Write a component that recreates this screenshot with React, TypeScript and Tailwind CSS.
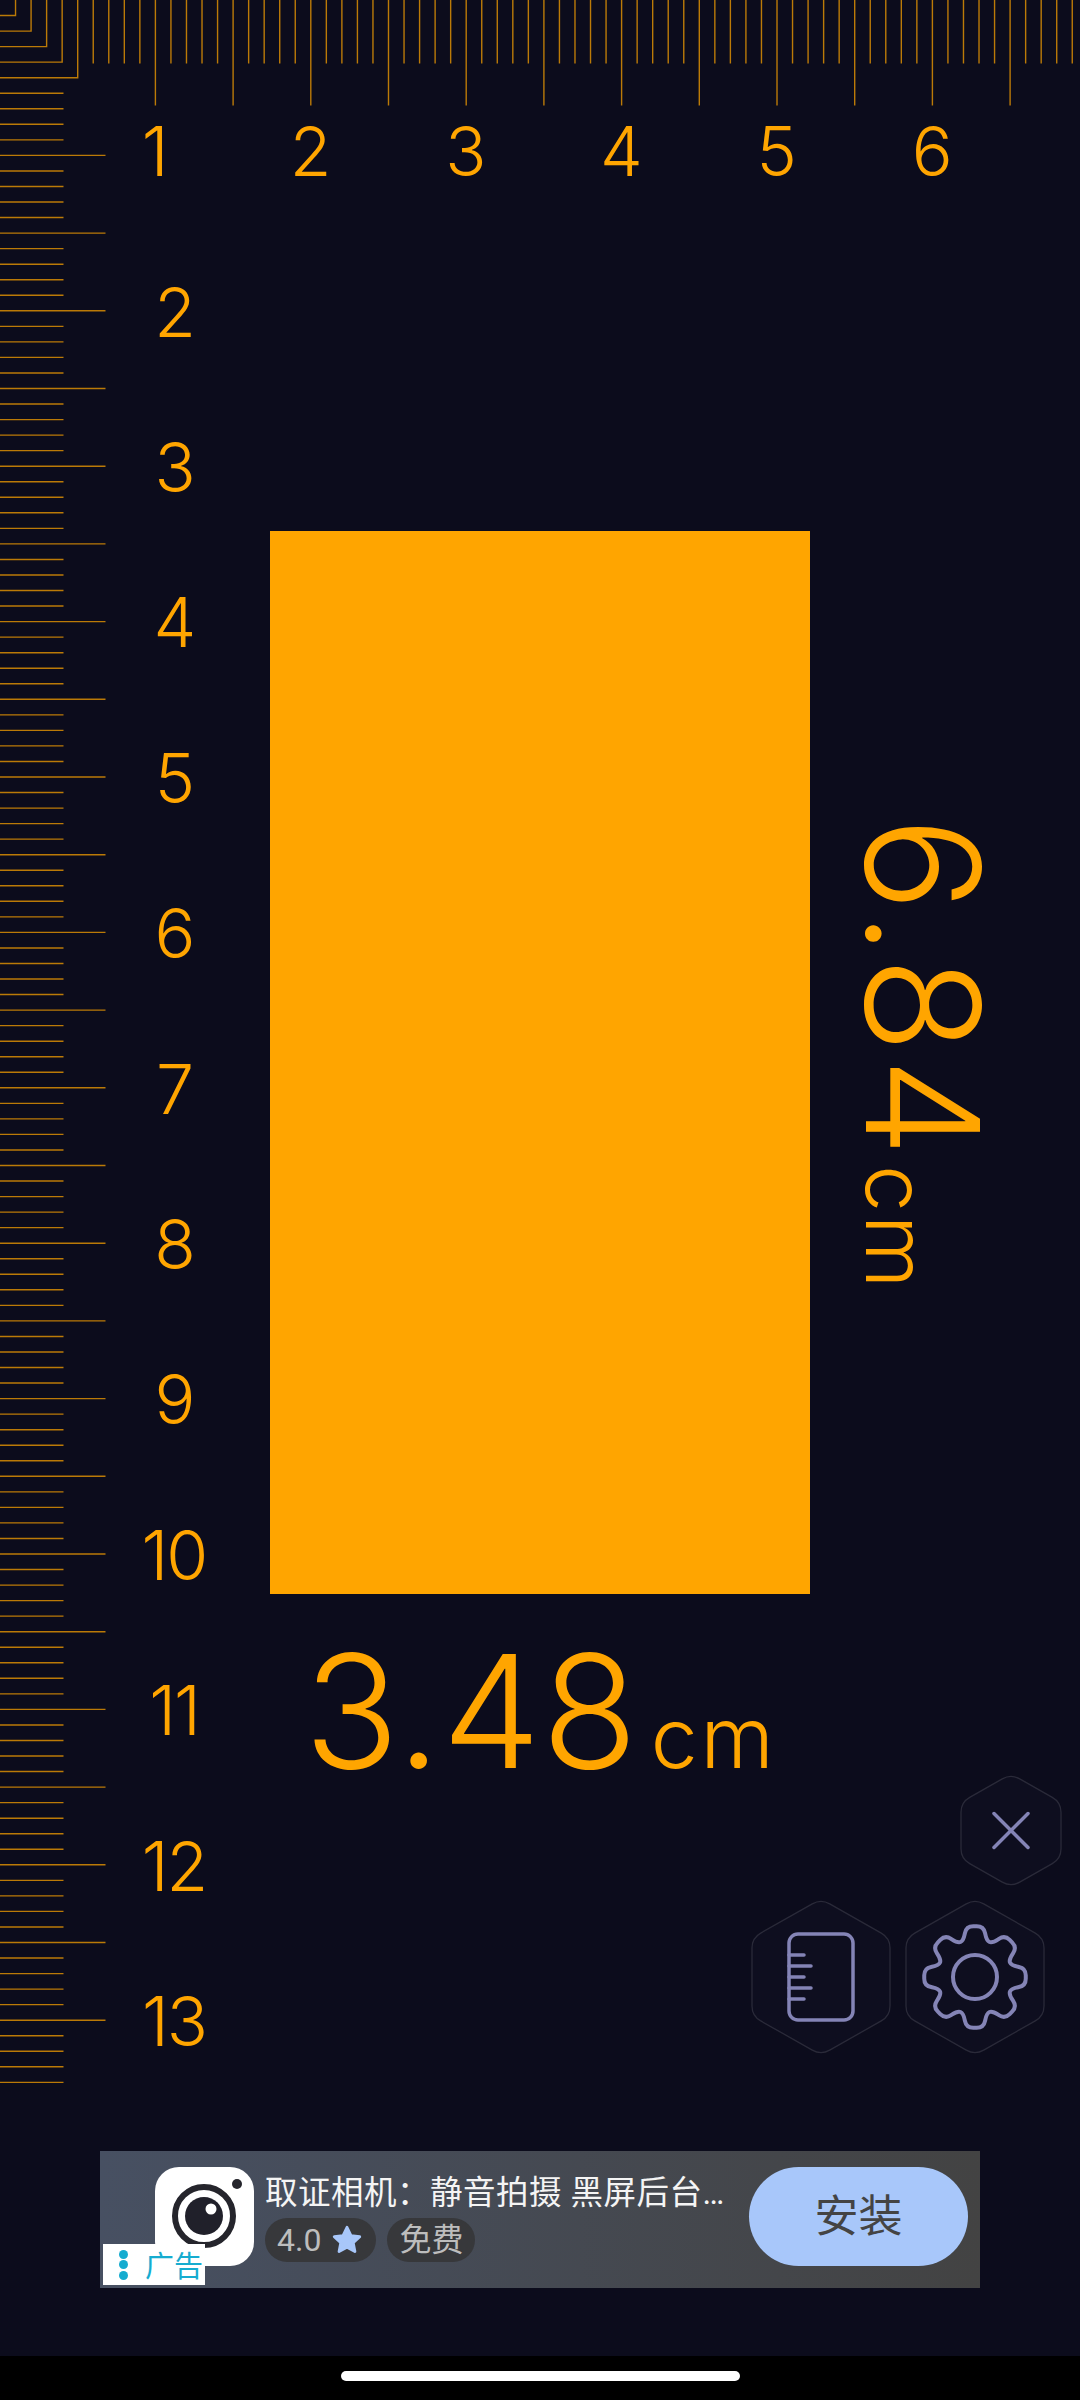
import React from "react";

const MM = 15.54;
const ORANGE = "#ffa500";
const ICON = "#8484b6";

// rounded polygon, used for the gear outline
const roundedPath = (pts: number[][], t: number) => {
  let d = "";
  pts.forEach((p, i) => {
    const prev = pts[(i - 1 + pts.length) % pts.length];
    const next = pts[(i + 1) % pts.length];
    const toward = (a: number[], b: number[]) => {
      const len = Math.hypot(b[0] - a[0], b[1] - a[1]);
      const k = Math.min(t, len / 2) / len;
      return [a[0] + (b[0] - a[0]) * k, a[1] + (b[1] - a[1]) * k];
    };
    const s = toward(p, prev);
    const e = toward(p, next);
    d += `${i === 0 ? "M" : "L"}${s[0].toFixed(2)} ${s[1].toFixed(2)}Q${p[0].toFixed(2)} ${p[1].toFixed(2)} ${e[0].toFixed(2)} ${e[1].toFixed(2)}`;
  });
  return d + "Z";
};

const gearPath = () => {
  const pts: number[][] = [];
  for (let i = 0; i < 8; i++) {
    const a = (i * Math.PI) / 4 - Math.PI / 2;
    const polar = (r: number, da: number) => [r * Math.cos(a + da), r * Math.sin(a + da)];
    pts.push(polar(38, -0.31), polar(51.5, -0.17), polar(51.5, 0.17), polar(38, 0.31));
  }
  return roundedPath(pts, 7);
};

const hexPath = (w: number, h: number) => {
  const x = w / 2;
  const y = h / 2;
  return roundedPath(
    [
      [0, -y],
      [x, -y / 2],
      [x, y / 2],
      [0, y],
      [-x, y / 2],
      [-x, -y / 2],
    ],
    10
  );
};

const Ruler = () => {
  const lines = [];
  // corner L shapes
  for (let k = 1; k <= 5; k++) {
    const p = k * MM;
    lines.push(<path key={`c${k}`} d={`M${p} 0V${p}H0`} fill="none" />);
  }
  for (let k = 6; k * MM < 1082; k++) {
    const len = k % 5 === 0 ? 105.5 : 63.5;
    lines.push(<line key={`t${k}`} x1={k * MM} x2={k * MM} y1={0} y2={len} />);
  }
  for (let k = 6; k <= 134; k++) {
    const len = k % 5 === 0 ? 105.5 : 63.5;
    lines.push(<line key={`l${k}`} y1={k * MM} y2={k * MM} x1={0} x2={len} />);
  }
  return (
    <svg className="absolute left-0 top-0" width={1080} height={2090} stroke={ORANGE} strokeWidth={1.4} strokeOpacity={0.72}>
      {lines}
    </svg>
  );
};

const HexButton = ({ w, h, className, children }: { w: number; h: number; className: string; children: React.ReactNode }) => (
  <div className={`absolute ${className}`}>
    <svg width={w + 4} height={h + 4} viewBox={`${-w / 2 - 2} ${-h / 2 - 2} ${w + 4} ${h + 4}`} fill="none" strokeLinecap="round" strokeLinejoin="round">
      <path d={hexPath(w, h)} fill="#0e0e1f" stroke="#2a2a39" strokeWidth={1.3} />
      {children}
    </svg>
  </div>
);

export default function App() {
  return (
    <div className="relative flex h-[2400px] w-[1080px] flex-col overflow-hidden bg-[#0c0c1c] font-['Inter',sans-serif] font-light text-[#ffa500]">
      <Ruler />

      {/* top ruler numbers */}
      <div className="flex h-[234px] shrink-0 pl-[76.5px] pt-[113px] text-[68px] leading-[76px] tracking-[-2px]">
        {[1, 2, 3, 4, 5, 6].map((n) => (
          <div key={n} className="w-[155.4px] text-center">
            {n}
          </div>
        ))}
      </div>

      <div className="flex h-[1864px] shrink-0">
        {/* left ruler numbers */}
        <div className="ml-[119px] w-[110px] shrink-0 text-[68px] tracking-[-2px]">
          {[2, 3, 4, 5, 6, 7, 8, 9, 10, 11, 12, 13].map((n) => (
            <div key={n} className="flex h-[155.4px] items-center justify-center">
              {n}
            </div>
          ))}
        </div>

        <div className="ml-[41px] flex w-[540px] shrink-0 flex-col pt-[297px]">
          <div className="h-[1063px] w-[540px] bg-[#ffa500]" />
          <div className="ml-[34px] mt-[39px] flex items-baseline gap-[12px] whitespace-nowrap leading-none">
            <span className="text-[157px] tracking-[1px]">3.48</span>
            <span className="text-[84px] tracking-[3px]">cm</span>
          </div>
        </div>

        <div className="ml-[34px] mt-[583px] flex h-[480px] items-end gap-[3px] whitespace-nowrap leading-none [writing-mode:vertical-rl]">
          <span className="text-[157px] tracking-[5px]">6.84</span>
          <span className="ml-[10px] text-[84px] tracking-[3px]">cm</span>
        </div>
      </div>

      {/* floating buttons */}
      <HexButton w={100} h={113} className="left-[959px] top-[1772px]">
        <path d="M-17 -17L17 17M17 -17L-17 17" stroke={ICON} strokeWidth={3.5} />
      </HexButton>
      <HexButton w={138} h={156} className="left-[750px] top-[1897px]">
        <g stroke={ICON} strokeWidth={3.5}>
          <rect x={-32} y={-43} width={64} height={86} rx={9} />
          <path d="M-32 -22H-17M-32 -11H-10M-32 0H-17M-32 11H-10M-32 22H-17" />
        </g>
      </HexButton>
      <HexButton w={138} h={156} className="left-[904px] top-[1897px]">
        <g stroke={ICON} strokeWidth={4}>
          <path d={gearPath()} />
          <circle r={22} />
        </g>
      </HexButton>

      {/* ad banner */}
      <div className="mx-[100px] mt-[53px] flex h-[137px] w-[880px] shrink-0 items-start bg-gradient-to-r from-[#475062] to-[#434343] pt-[16px] font-normal tracking-normal">
        <div className="relative ml-[55px] h-[99px] w-[99px] shrink-0 rounded-[24px] bg-white">
          <svg className="absolute left-0 top-0" width={99} height={99}>
            <circle cx={49} cy={49} r={29} fill="none" stroke="#25252c" strokeWidth={6} />
            <circle cx={49} cy={49} r={19} fill="#20202a" />
            <circle cx={56} cy={42} r={5.5} fill="#fff" />
            <circle cx={82} cy={17} r={5} fill="#25252c" />
          </svg>
        </div>
        <div className="absolute left-[103px] top-[2244px] flex h-[41px] w-[102px] items-center gap-[17px] bg-white pl-[16px] font-['Noto_Sans_CJK_SC',sans-serif] text-[29px] text-[#16acd0]">
          <div className="flex flex-col gap-[1.5px]">
            <span className="h-[9px] w-[9px] rounded-full bg-[#16acd0]" />
            <span className="h-[9px] w-[9px] rounded-full bg-[#16acd0]" />
            <span className="h-[9px] w-[9px] rounded-full bg-[#16acd0]" />
          </div>
          <span className="leading-none">广告</span>
        </div>

        <div className="ml-[11px] mt-[5px] w-[470px] shrink-0 font-['Roboto','Noto_Sans_CJK_SC',sans-serif]">
          <div className="whitespace-nowrap text-[32.5px] leading-[42px] tracking-[0.5px] text-[#f4f4f4]">{"取证相机\uFF1A静音拍摄 黑屏后台…"}</div>
          <div className="mt-[4px] flex gap-[11px] text-[32px] text-[#bdbdbd]">
            <div className="flex h-[44px] items-center gap-[9px] rounded-full bg-[#37383b] px-[12px]">
              4.0
              <svg width={34} height={34} viewBox="0 0 24 24" fill="#a8c7fa" stroke="#a8c7fa" strokeWidth={2} strokeLinejoin="round">
                <path d="M12 3l2.8 5.900 6.200.8-4.600 4.300 1.200 6.200L12 17.100 6.400 20.200l1.200-6.200L3 9.700l6.200-.8z" />
              </svg>
            </div>
            <div className="flex h-[44px] items-center rounded-full bg-[#37383b] px-[12px]">免费</div>
          </div>
        </div>

        <div className="ml-[14px] flex h-[99px] w-[219px] shrink-0 items-center justify-center rounded-full bg-[#a8c7fa] pb-[8px] font-['Noto_Sans_CJK_SC',sans-serif] text-[44px] text-[#444444]">
          安装
        </div>
      </div>

      {/* nav bar */}
      <div className="mt-auto flex h-[44px] shrink-0 justify-center bg-black pt-[15px]">
        <div className="h-[10px] w-[399px] rounded-full bg-white" />
      </div>
    </div>
  );
}
